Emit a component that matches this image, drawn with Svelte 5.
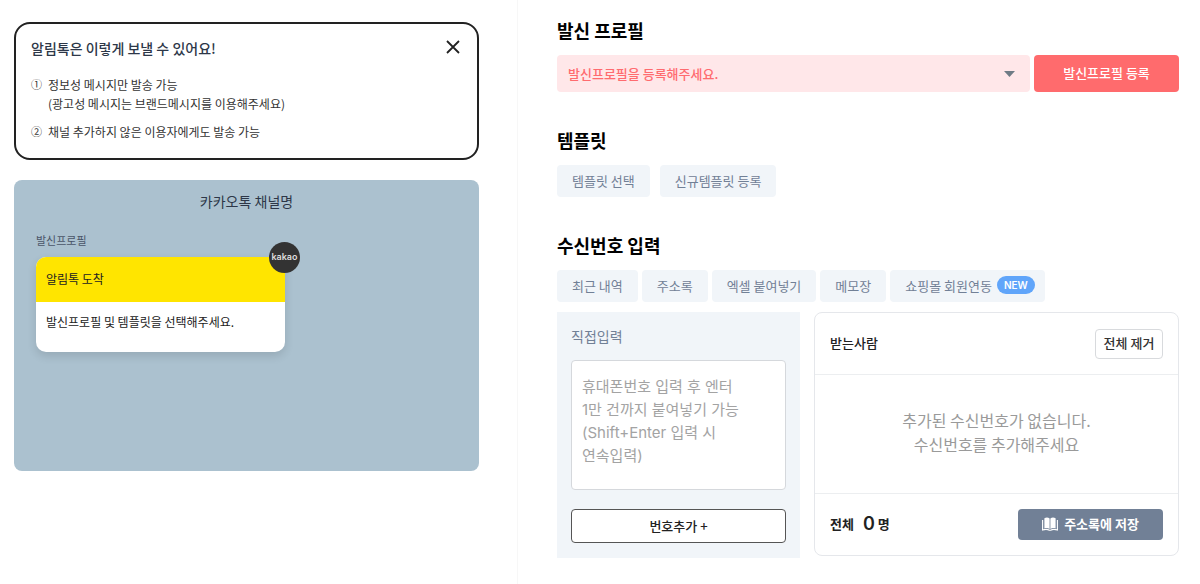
<script lang="ts">
	let showGuide = true;
	let profile = '';
	let numbers = '';
	let receivers: string[] = [];

	const templateButtons = ['템플릿 선택', '신규템플릿 등록'];
	const sources = [
		{ name: '최근 내역' },
		{ name: '주소록' },
		{ name: '엑셀 붙여넣기' },
		{ name: '메모장' },
		{ name: '쇼핑몰 회원연동', isNew: true }
	];

	function addNumbers() {
		const list = numbers.split('\n').map((n) => n.trim());
		receivers = [...receivers, ...list.filter((n) => n)];
		numbers = '';
	}
</script>

<div class="page">
	<aside class="side">
		{#if showGuide}
			<section class="guide">
				<header>
					<h2>알림톡은 이렇게 보낼 수 있어요!</h2>
					<button class="close" aria-label="닫기" on:click={() => (showGuide = false)}>
						<svg width="14" height="14" viewBox="0 0 14 14">
							<path d="M1 1L13 13M13 1L1 13" stroke="#222" stroke-width="1.8" fill="none" />
						</svg>
					</button>
				</header>
				<ul>
					<li>
						<span class="num">①</span>
						<span>정보성 메시지만 발송 가능<br />(광고성 메시지는 브랜드메시지를 이용해주세요)</span>
					</li>
					<li>
						<span class="num">②</span>
						<span>채널 추가하지 않은 이용자에게도 발송 가능</span>
					</li>
				</ul>
			</section>
		{/if}

		<section class="preview">
			<h2>카카오톡 채널명</h2>
			<p class="sender">발신프로필</p>
			<div class="bubble">
				<span class="kakao">kakao</span>
				<div class="bubble-head">알림톡 도착</div>
				<div class="bubble-body">발신프로필 및 템플릿을 선택해주세요.</div>
			</div>
		</section>
	</aside>

	<main class="form">
		<section>
			<h1><label for="profile">발신 프로필</label></h1>
			<div class="profile">
				<div class="select">
					<select id="profile" bind:value={profile}>
						<option value="">발신프로필을 등록해주세요.</option>
					</select>
					<svg width="11" height="6" viewBox="0 0 11 6">
						<path d="M0 0H11L5.5 6Z" fill="#6f7b85" />
					</svg>
				</div>
				<button class="register">발신프로필 등록</button>
			</div>
		</section>

		<section>
			<h1>템플릿</h1>
			<div class="chips wide">
				{#each templateButtons as name}
					<button class="chip">{name}</button>
				{/each}
			</div>
		</section>

		<section>
			<h1>수신번호 입력</h1>
			<div class="chips">
				{#each sources as source}
					<button class="chip" class:has-badge={source.isNew}>
						{source.name}
						{#if source.isNew}<span class="badge">NEW</span>{/if}
					</button>
				{/each}
			</div>

			<div class="receive">
				<div class="direct">
					<label for="numbers">직접입력</label>
					<textarea
						id="numbers"
						bind:value={numbers}
						placeholder={'휴대폰번호 입력 후 엔터\n1만 건까지 붙여넣기 가능\n(Shift+Enter 입력 시\n연속입력)'}
					></textarea>
					<button class="add" on:click={addNumbers}>번호추가 +</button>
				</div>

				<div class="card">
					<header>
						<span>받는사람</span>
						<button class="clear" on:click={() => (receivers = [])}>전체 제거</button>
					</header>
					<div class="list">
						{#each receivers as receiver}
							<p>{receiver}</p>
						{:else}
							<p>추가된 수신번호가 없습니다.<br />수신번호를 추가해주세요</p>
						{/each}
					</div>
					<footer>
						<span class="total">전체 <b>{receivers.length}</b>명</span>
						<button class="save">
							<svg width="16" height="14" viewBox="0 0 16 14" fill="#fff">
								<path d="M2.4 1.2C4 .2 6.2.2 7.6 1.4V12C6 10.8 4.2 10.7 2.4 11.4Z" />
								<path d="M8.4 1.4C9.8.2 12 .2 13.6 1.2V11.4C11.8 10.7 10 10.8 8.4 12Z" />
								<path
									d="M.6 3V13C3 12.2 5.6 12.2 7.4 13.3H8.6C10.4 12.2 13 12.2 15.4 13V3"
									fill="none"
									stroke="#fff"
									stroke-width="1.1"
								/>
							</svg>
							주소록에 저장
						</button>
					</footer>
				</div>
			</div>
		</section>
	</main>
</div>

<style>
	:global(body) {
		background: #fff;
	}

	.page {
		display: grid;
		grid-template-columns: 518fr 682fr;
		min-height: 100vh;
		font-family: 'Noto Sans CJK KR', sans-serif;
		font-size: 13px;
		color: #222;
	}
	.page * {
		box-sizing: border-box;
	}
	h1,
	h2,
	p,
	ul {
		margin: 0;
		padding: 0;
	}
	button,
	select,
	textarea {
		font: inherit;
		color: inherit;
		margin: 0;
		border: 0;
		padding: 0;
	}
	button {
		cursor: pointer;
		font-weight: 500;
		border-radius: 4px;
		padding-bottom: 2px;
	}

	/* left column */
	.side {
		padding: 22px 38px 22px 14px;
		border-right: 1px solid #f7f7f7;
	}
	.guide {
		border: 2px solid #222;
		border-radius: 16px;
		height: 138px;
		padding: 12px 15px;
		margin-bottom: 20px;
	}
	.guide header {
		display: flex;
		justify-content: space-between;
		align-items: flex-start;
		margin-bottom: 15px;
	}
	.guide h2 {
		font-size: 14px;
		line-height: 24px;
		font-weight: 500;
		color: #2d3748;
	}
	.close {
		display: flex;
		padding: 4px 2px;
		background: none;
	}
	.guide li {
		display: flex;
		gap: 6px;
		list-style: none;
		font-size: 12px;
		line-height: 19px;
		color: #333;
		margin-bottom: 9px;
	}
	.guide .num {
		width: 11px;
		font-size: 11px;
	}
	.preview {
		height: 291px;
		border-radius: 8px;
		background: #abc1cf;
		padding: 9px 22px;
	}
	.preview h2 {
		font-size: 14px;
		line-height: 24px;
		font-weight: 400;
		text-align: center;
		color: #2d3748;
	}
	.sender {
		margin: 18px 0 8px;
		font-size: 11px;
		line-height: 18px;
		color: #4a5568;
	}
	.bubble {
		position: relative;
		width: 249px;
		border-radius: 10px;
		background: #fff;
		box-shadow: 0 4px 10px rgba(0, 0, 0, 0.12);
		font-size: 12px;
		line-height: 20px;
	}
	.bubble-head {
		padding: 12px 10px 13px;
		border-radius: 10px 10px 0 0;
		background: #ffe500;
	}
	.bubble-body {
		padding: 10px 10px 20px;
	}
	.kakao {
		position: absolute;
		top: -15px;
		right: -15px;
		width: 31px;
		height: 31px;
		border-radius: 50%;
		background: #333;
		color: #ddd;
		font-family: Inter, sans-serif;
		font-size: 9px;
		font-weight: 600;
		line-height: 30px;
		text-align: center;
	}

	/* right column */
	.form {
		display: flex;
		flex-direction: column;
		gap: 36px;
		min-width: 0;
		padding: 18px 21px 26px 39px;
	}
	h1 {
		font-size: 18px;
		line-height: 24px;
		font-weight: 700;
		color: #000;
		margin-bottom: 13px;
	}
	.profile {
		display: flex;
		gap: 4px;
		height: 37px;
	}
	.select {
		position: relative;
		flex: 1;
	}
	select {
		appearance: none;
		width: 100%;
		height: 100%;
		padding: 0 32px 1px 11px;
		border-radius: 4px;
		background: #ffe7e9;
		color: #ff6b6f;
		font-size: 13px;
		font-weight: 500;
	}
	.select svg {
		position: absolute;
		top: 16px;
		right: 15px;
		pointer-events: none;
	}
	.register {
		width: 145px;
		background: #ff6b6d;
		color: #fff;
	}

	.chips {
		display: flex;
		gap: 4px;
	}
	.chips.wide {
		gap: 10px;
	}
	.chip {
		display: flex;
		align-items: center;
		gap: 5px;
		height: 32px;
		padding: 0 15px 2px;
		background: #f1f5f9;
		color: #718096;
		font-weight: 400;
	}
	.chip.has-badge {
		padding-right: 10px;
	}
	.badge {
		padding: 0 7px;
		border-radius: 9px;
		background: #60a5fa;
		color: #fff;
		font-family: Inter, sans-serif;
		font-size: 10px;
		line-height: 18px;
		font-weight: 600;
	}

	.receive {
		display: grid;
		grid-template-columns: minmax(0, 243fr) minmax(0, 365fr);
		gap: 14px;
		align-items: start;
		margin-top: 10px;
	}
	.direct {
		display: flex;
		flex-direction: column;
		padding: 12px 14px 15px;
		background: #f1f5f9;
	}
	.direct label {
		font-size: 14px;
		line-height: 24px;
		color: #718096;
		margin-bottom: 12px;
	}
	textarea {
		height: 130px;
		padding: 14px 10px;
		border: 1px solid #d5d8dc;
		border-radius: 4px;
		background: #fff;
		resize: none;
		font-family: Inter, 'Noto Sans CJK KR', sans-serif;
		font-size: 15px;
		line-height: 23px;
	}
	textarea::placeholder {
		color: #a3a3a3;
		opacity: 1;
	}
	.add {
		height: 34px;
		margin-top: 19px;
		border: 1px solid #555;
		background: #fff;
		color: #222;
	}
	.card {
		border: 1px solid #e5e7eb;
		border-radius: 8px;
	}
	.card header,
	.card footer {
		display: flex;
		align-items: center;
		justify-content: space-between;
		height: 62px;
		padding: 0 15px;
		font-weight: 500;
	}
	.card header {
		border-bottom: 1px solid #eceef0;
	}
	.card footer {
		border-top: 1px solid #eceef0;
	}
	.card header span,
	.total {
		padding-bottom: 2px;
	}
	.clear {
		width: 68px;
		height: 30px;
		border: 1px solid #d8dadd;
		background: #fff;
		color: #333;
	}
	.list {
		display: flex;
		flex-direction: column;
		justify-content: center;
		height: 118px;
		padding-bottom: 4px;
		overflow: auto;
		text-align: center;
		font-size: 16px;
		line-height: 24px;
		color: #9a9a9a;
	}
	.total {
		display: flex;
		align-items: center;
		gap: 3px;
		font-weight: 700;
	}
	.total b {
		font-family: Inter, sans-serif;
		font-size: 18px;
		font-weight: 600;
		margin-left: 6px;
	}
	.save {
		display: flex;
		align-items: center;
		justify-content: center;
		gap: 6px;
		width: 145px;
		height: 31px;
		background: #718096;
		color: #fff;
		font-weight: 700;
	}
</style>
